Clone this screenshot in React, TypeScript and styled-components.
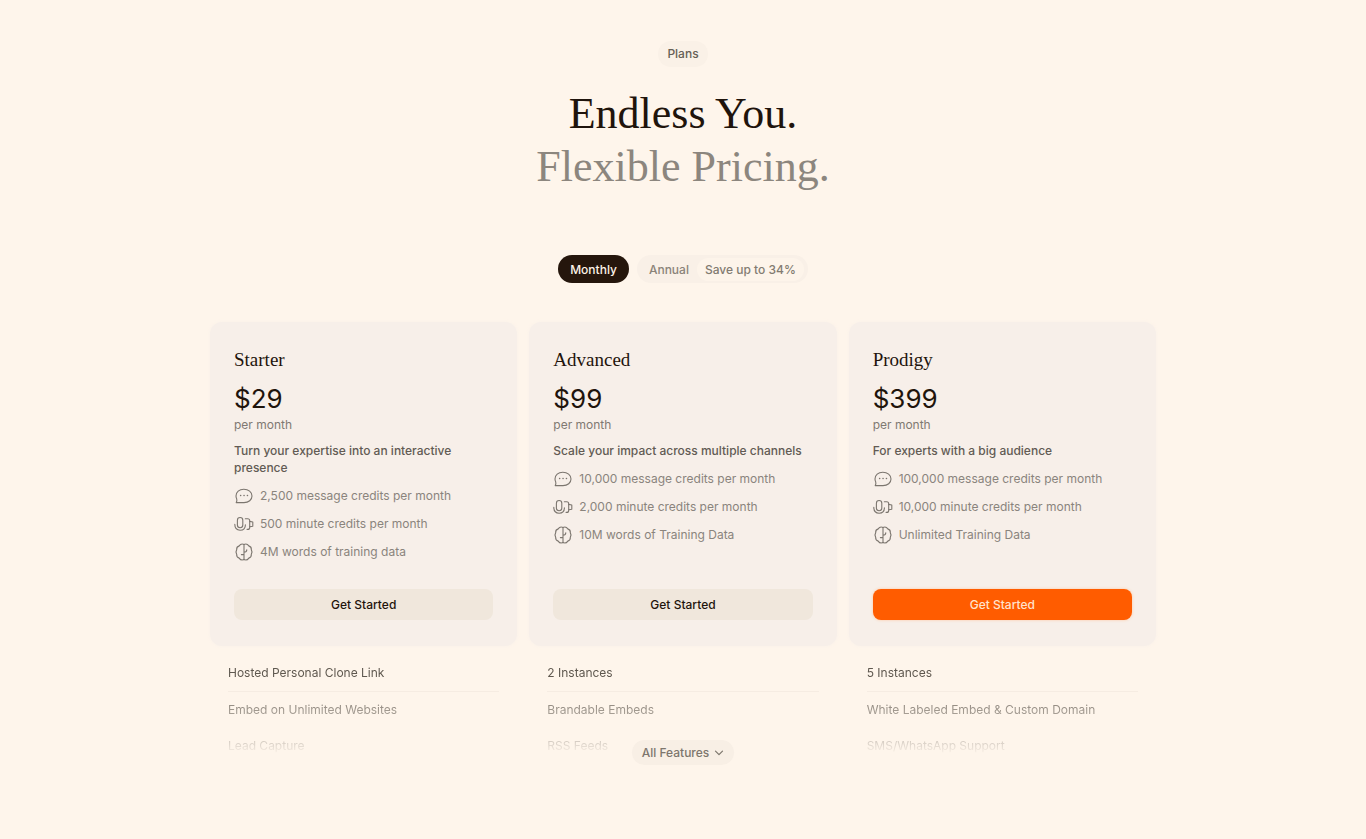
import React, { useState } from "react";
import styled, { createGlobalStyle, css } from "styled-components";

const GlobalStyle = createGlobalStyle`
  *, *::before, *::after { box-sizing: border-box; }
  body {
    margin: 0;
    background: #fef5eb;
    color: #1f140c;
    font-family: Inter, "Liberation Sans", sans-serif;
    font-size: 12px;
    -webkit-font-smoothing: antialiased;
  }
  h1, h2, p, ul { margin: 0; padding: 0; }
  ul { list-style: none; }
  button { font: inherit; border: 0; cursor: pointer; }
`;

const Page = styled.main`
  display: flex;
  flex-direction: column;
  align-items: center;
  padding: 41px 24px 72px;
`;

const Tag = styled.span`
  padding: 4px 9px;
  border-radius: 13px;
  background: #faf1e7;
  color: #665f56;
  line-height: 18px;
  font-weight: 500;
`;

const Heading = styled.h1`
  margin-top: 20px;
  font-family: "Liberation Serif", serif;
  font-size: 44px;
  line-height: 53px;
  font-weight: 400;
  text-align: center;
`;

const HeadingMuted = styled.span`
  display: block;
  color: #8c867e;
`;

const Toggle = styled.div`
  display: flex;
  gap: 8px;
  margin-top: 62px;
`;

const Period = styled.button<{ $active: boolean }>`
  display: flex;
  align-items: center;
  height: 28px;
  padding: 0 12px;
  border-radius: 14px;
  background: #f9f0e7;
  color: #8a8379;
  font-weight: 500;
  ${(p) =>
    p.$active &&
    css`
      background: #25160c;
      color: #fdf3e8;
    `}
`;

const Saving = styled.span`
  margin: 0 -8px 0 8px;
  padding: 0 8px;
  border-radius: 12px;
  background: #fdf4ea;
  color: #827b71;
  line-height: 23px;
`;

const Plans = styled.section`
  display: grid;
  grid-template-columns: repeat(3, 1fr);
  column-gap: 12px;
  width: 100%;
  max-width: 946px;
  margin-top: 39px;
`;

const Card = styled.article`
  display: flex;
  flex-direction: column;
  padding: 26px 24px;
  border-radius: 12px;
  background: #f7efe9;
  box-shadow: 0 0 4px #faf1e9;
`;

const PlanName = styled.h2`
  font-family: "Liberation Serif", serif;
  font-size: 19px;
  line-height: 24px;
  font-weight: 400;
`;

const Price = styled.p`
  margin-top: 10px;
  font-size: 26px;
  line-height: 34px;
  font-weight: 400;
`;

const PerMonth = styled.p`
  color: #7f7972;
  line-height: 18px;
`;

const Summary = styled.p`
  margin-top: 8px;
  color: #625b54;
  line-height: 17px;
  font-weight: 500;
`;

const Credits = styled.ul`
  display: grid;
  gap: 8px;
  margin: 10px 0 27px;
`;

const Credit = styled.li`
  display: flex;
  align-items: center;
  gap: 6px;
  color: #8a847d;
  line-height: 20px;
`;

const Icon = styled.svg`
  flex: none;
  width: 20px;
  height: 20px;
  fill: none;
  stroke: #7c766f;
  stroke-width: 1.1;
  stroke-linecap: round;
  stroke-linejoin: round;
`;

const StartButton = styled.button<{ $primary: boolean }>`
  height: 31px;
  margin-top: auto;
  border-radius: 8px;
  background: ${(p) => (p.$primary ? "#ff5c00" : "#f0e7dc")};
  color: ${(p) => (p.$primary ? "#ffe3cc" : "#1f140c")};
  box-shadow: ${(p) => (p.$primary ? "0 0 3px #ffc79f" : "none")};
  font-weight: 500;
`;

const Features = styled.div`
  display: grid;
  grid-template-columns: repeat(3, 1fr);
  column-gap: 12px;
  width: 100%;
  max-width: 946px;
  margin-top: 9px;
  mask-image: linear-gradient(#000 22%, rgba(0, 0, 0, 0.6) 50%, rgba(0, 0, 0, 0.27) 78%, transparent 92%);
`;

const FeatureList = styled.ul`
  padding: 0 18px;
`;

const Feature = styled.li`
  padding: 9px 0;
  color: #5f584f;
  line-height: 18px;
  &:first-child { border-bottom: 1px solid #f4eae0; }
`;

const AllFeatures = styled.button`
  display: flex;
  align-items: center;
  gap: 5px;
  height: 25px;
  margin-top: -24px;
  padding: 0 10px;
  border-radius: 13px;
  background: #f8efe5;
  color: #7d766d;
  font-weight: 500;
  z-index: 1;
`;

const Chevron = styled.svg`
  width: 10px;
  height: 10px;
  fill: none;
  stroke: currentColor;
  stroke-width: 1.2;
  stroke-linecap: round;
  stroke-linejoin: round;
`;

const MessageIcon = () => (
  <Icon viewBox="0 0 20 20" aria-hidden="true">
    <path d="M2.200 16.500c.8-1.200.9-2.300.5-3.600-.4-1-.7-2-.7-3C2 6 5.200 3.200 9.800 3.200s8.200 2.800 8.200 6.700-3.400 6.700-8 6.700H2.200Z" />
    <path d="M6.600 9.600h.1M10 9.600h.1M13.400 9.600h.1" strokeWidth="1.500" />
  </Icon>
);

const MinutesIcon = () => (
  <Icon viewBox="0 0 20 20" aria-hidden="true">
    <rect x="3.400" y="3.500" width="5.400" height="10.200" rx="2.700" />
    <path d="M.8 10.300c0 3.700 2.100 5.900 5.300 5.900s5.300-2.200 5.300-5.500" />
    <path d="M11.300 4.800h2.400c1.300 0 2 .7 2 2v6.600c0 1.300-.7 2-2 2h-.6" />
    <path d="M15.700 7.400 18.800 8v4.200l-3.100.6" />
  </Icon>
);

const BrainIcon = () => (
  <Icon viewBox="0 0 20 20" aria-hidden="true">
    <path d="M10 2.400C8.300 1.700 6.200 2.300 5.200 3.900 3.500 4.400 2.500 5.900 2.700 7.600c-.9 1.500-.9 3.300 0 4.800-.2 1.700.8 3.200 2.500 3.700 1 1.600 3.100 2.200 4.800 1.500 1.700.7 3.800.1 4.800-1.500 1.700-.5 2.700-2 2.500-3.700.9-1.500.9-3.300 0-4.800.2-1.700-.8-3.200-2.500-3.700-1-1.600-3.100-2.200-4.800-1.500Z" />
    <path d="M10 2.400v15.200M10 12.600H7.400M10 10.200c1.800 0 2.800-.9 2.800-2.500" />
  </Icon>
);

const creditIcons = [MessageIcon, MinutesIcon, BrainIcon];

const plans = [
  {
    name: "Starter",
    price: "$29",
    summary: "Turn your expertise into an interactive presence",
    credits: ["2,500 message credits per month", "500 minute credits per month", "4M words of training data"],
    features: ["Hosted Personal Clone Link", "Embed on Unlimited Websites", "Lead Capture"],
  },
  {
    name: "Advanced",
    price: "$99",
    summary: "Scale your impact across multiple channels",
    credits: ["10,000 message credits per month", "2,000 minute credits per month", "10M words of Training Data"],
    features: ["2 Instances", "Brandable Embeds", "RSS Feeds"],
  },
  {
    name: "Prodigy",
    price: "$399",
    summary: "For experts with a big audience",
    credits: ["100,000 message credits per month", "10,000 minute credits per month", "Unlimited Training Data"],
    features: ["5 Instances", "White Labeled Embed & Custom Domain", "SMS/WhatsApp Support"],
    primary: true,
  },
];

export default function App() {
  const [annual, setAnnual] = useState(false);

  return (
    <>
      <GlobalStyle />
      <Page>
        <Tag>Plans</Tag>
        <Heading>
          Endless You.
          <HeadingMuted>Flexible Pricing.</HeadingMuted>
        </Heading>
        <Toggle role="group" aria-label="Billing period">
          <Period type="button" $active={!annual} aria-pressed={!annual} onClick={() => setAnnual(false)}>
            Monthly
          </Period>
          <Period type="button" $active={annual} aria-pressed={annual} onClick={() => setAnnual(true)}>
            Annual
            <Saving>Save up to 34%</Saving>
          </Period>
        </Toggle>
        <Plans>
          {plans.map((plan) => (
            <Card key={plan.name}>
              <PlanName>{plan.name}</PlanName>
              <Price>{plan.price}</Price>
              <PerMonth>per month</PerMonth>
              <Summary>{plan.summary}</Summary>
              <Credits>
                {plan.credits.map((text, i) => {
                  const CreditIcon = creditIcons[i];
                  return (
                    <Credit key={text}>
                      <CreditIcon />
                      {text}
                    </Credit>
                  );
                })}
              </Credits>
              <StartButton type="button" $primary={!!plan.primary}>
                Get Started
              </StartButton>
            </Card>
          ))}
        </Plans>
        <Features>
          {plans.map((plan) => (
            <FeatureList key={plan.name}>
              {plan.features.map((text) => (
                <Feature key={text}>{text}</Feature>
              ))}
            </FeatureList>
          ))}
        </Features>
        <AllFeatures type="button">
          All Features
          <Chevron viewBox="0 0 10 10" aria-hidden="true">
            <path d="M1.500 3.200 5 6.700l3.500-3.500" />
          </Chevron>
        </AllFeatures>
      </Page>
    </>
  );
}
